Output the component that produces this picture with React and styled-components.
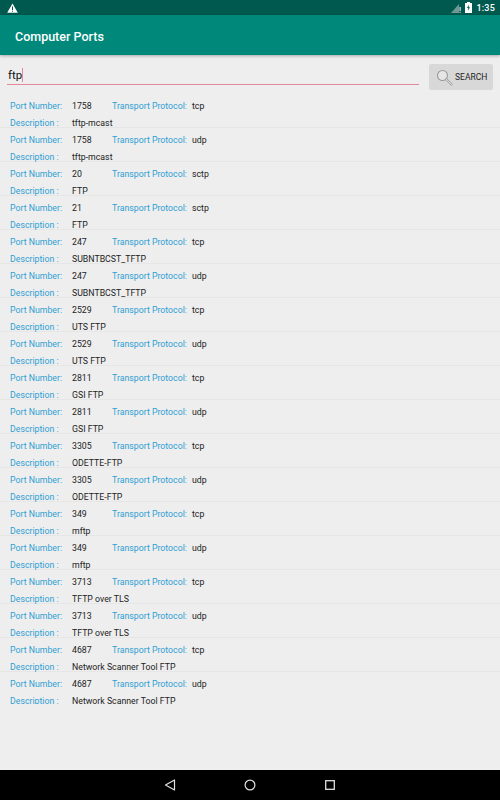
import React from 'react';
import styled, { createGlobalStyle } from 'styled-components';

const GlobalStyle = createGlobalStyle`
  html, body {
    margin: 0;
    padding: 0;
    background: #eeeeee;
    font-family: Roboto, "Liberation Sans", sans-serif;
  }
`;

const Screen = styled.div`
  width: 500px;
  height: 800px;
  display: flex;
  flex-direction: column;
  overflow: hidden;
  background: #eeeeee;
`;

const StatusBar = styled.div`
  height: 15px;
  background: #00594f;
  display: flex;
  align-items: center;
  justify-content: space-between;
  padding: 0 5px 0 7px;
  color: #ffffff;
`;

const StatusRight = styled.div`
  display: flex;
  align-items: center;
  gap: 4px;
`;

const Clock = styled.span`
  font-size: 9px;
  font-weight: 500;
  letter-spacing: 0.2px;
`;

const AppBar = styled.div`
  height: 40px;
  flex: none;
  background: #00897b;
  display: flex;
  align-items: center;
  padding: 2px 0 0 15px;
  box-sizing: border-box;
  color: #ffffff;
  font-size: 12.5px;
  font-weight: 500;
  box-shadow: 0 1px 3px rgba(0, 0, 0, 0.3);
  position: relative;
`;

const SearchRow = styled.div`
  height: 39px;
  flex: none;
  box-sizing: border-box;
  display: flex;
  align-items: flex-start;
  padding: 9px 7px 0;
`;

const SearchField = styled.div`
  width: 412px;
  height: 21px;
  box-sizing: border-box;
  border-bottom: 1.5px solid #e38a9a;
  font-size: 11.5px;
  color: #111111;
  padding: 2px 0 0 1px;
  display: flex;
  align-items: center;
`;

const Caret = styled.span`
  width: 1px;
  height: 14px;
  background: #e38a9a;
`;

const SearchButton = styled.div`
  width: 64px;
  height: 26px;
  margin-left: 10px;
  background: #d8d8d8;
  border-radius: 2px;
  display: flex;
  align-items: center;
  padding-left: 7px;
  box-sizing: border-box;
  gap: 2px;
  font-size: 8.5px;
  color: #222222;
`;

const List = styled.div`
  height: 610px;
  flex: none;
  overflow: hidden;
`;

const PortRow = styled.div`
  height: 34px;
  box-sizing: border-box;
  padding-left: 10px;
  border-bottom: 1px solid #e6e6e6;
  font-size: 8.75px;
  color: #222222;
`;

const Line = styled.div`
  height: ${({ $h }) => $h}px;
  display: flex;
  align-items: center;
  white-space: nowrap;
`;

const Label = styled.span`
  color: #2f9fd4;
  width: ${({ $w }) => $w}px;
  flex: none;
`;

const Value = styled.span`
  width: ${({ $w }) => ($w ? `${$w}px` : 'auto')};
  flex: none;
`;

const Filler = styled.div`
  flex: 1;
`;

const NavBar = styled.div`
  height: 30px;
  flex: none;
  background: #000000;
  display: flex;
  align-items: center;
  padding-left: 164px;
  gap: 68px;
`;

const ports = [
  ['1758', 'tcp', 'tftp-mcast'],
  ['1758', 'udp', 'tftp-mcast'],
  ['20', 'sctp', 'FTP'],
  ['21', 'sctp', 'FTP'],
  ['247', 'tcp', 'SUBNTBCST_TFTP'],
  ['247', 'udp', 'SUBNTBCST_TFTP'],
  ['2529', 'tcp', 'UTS FTP'],
  ['2529', 'udp', 'UTS FTP'],
  ['2811', 'tcp', 'GSI FTP'],
  ['2811', 'udp', 'GSI FTP'],
  ['3305', 'tcp', 'ODETTE-FTP'],
  ['3305', 'udp', 'ODETTE-FTP'],
  ['349', 'tcp', 'mftp'],
  ['349', 'udp', 'mftp'],
  ['3713', 'tcp', 'TFTP over TLS'],
  ['3713', 'udp', 'TFTP over TLS'],
  ['4687', 'tcp', 'Network Scanner Tool FTP'],
  ['4687', 'udp', 'Network Scanner Tool FTP'],
];

const WarningIcon = () => (
  <svg width="11" height="10" viewBox="0 0 11 10">
    <path d="M5.5 0.5 L10.8 9.8 H0.2 Z" fill="#fff" />
    <rect x="5" y="3.5" width="1" height="3.5" fill="#00594f" />
    <rect x="5" y="7.7" width="1" height="1" fill="#00594f" />
  </svg>
);

const SignalIcon = () => (
  <svg width="10" height="10" viewBox="0 0 10 10">
    <path d="M0 10 L8 1 V10 Z" fill="#6f9a94" />
    <rect x="8.6" y="4" width="1" height="4" fill="#fff" />
    <rect x="8.6" y="8.8" width="1" height="1" fill="#fff" />
  </svg>
);

const BatteryIcon = () => (
  <svg width="7" height="11" viewBox="0 0 7 11">
    <path d="M2 0 H5 V1 H7 V11 H0 V1 H2 Z" fill="#fff" />
    <path d="M4 2.5 L2 6 H3.3 L3 8.8 L5 5.2 H3.7 Z" fill="#00594f" />
  </svg>
);

const MagnifierIcon = () => (
  <svg width="17" height="17" viewBox="0 0 17 17" fill="none">
    <circle cx="6.5" cy="6.5" r="5" stroke="#9a9a9a" strokeWidth="1.1" fill="#e6e6e6" />
    <path d="M10.3 10.3 L15.5 15.5" stroke="#9f9f9f" strokeWidth="2.2" strokeLinecap="round" />
    <path d="M10.3 10.3 L15.5 15.5" stroke="#f2f2f2" strokeWidth="0.8" strokeLinecap="round" />
  </svg>
);

const BackIcon = () => (
  <svg width="12" height="12" viewBox="0 0 12 12" fill="none">
    <path d="M10.5 1 V11 L1.5 6 Z" stroke="#e0e0e0" strokeWidth="1.2" strokeLinejoin="round" />
  </svg>
);

const HomeIcon = () => (
  <svg width="12" height="12" viewBox="0 0 12 12" fill="none">
    <circle cx="6" cy="6" r="4.9" stroke="#e0e0e0" strokeWidth="1.2" />
  </svg>
);

const RecentIcon = () => (
  <svg width="12" height="12" viewBox="0 0 12 12" fill="none">
    <rect x="1.7" y="1.7" width="8.6" height="8.6" stroke="#e0e0e0" strokeWidth="1.3" />
  </svg>
);

export default function App() {
  return (
    <Screen>
      <GlobalStyle />
      <StatusBar>
        <WarningIcon />
        <StatusRight>
          <SignalIcon />
          <BatteryIcon />
          <Clock>1:35</Clock>
        </StatusRight>
      </StatusBar>
      <AppBar>Computer Ports</AppBar>
      <SearchRow>
        <SearchField>
          ftp
          <Caret />
        </SearchField>
        <SearchButton>
          <MagnifierIcon />
          SEARCH
        </SearchButton>
      </SearchRow>
      <List>
        {ports.map(([port, protocol, description], i) => (
          <PortRow key={i}>
            <Line $h={24}>
              <Label $w={62}>Port Number:</Label>
              <Value $w={40}>{port}</Value>
              <Label $w={80}>Transport Protocol:</Label>
              <Value>{protocol}</Value>
            </Line>
            <Line $h={10}>
              <Label $w={62}>Description :</Label>
              <Value>{description}</Value>
            </Line>
          </PortRow>
        ))}
      </List>
      <Filler />
      <NavBar>
        <BackIcon />
        <HomeIcon />
        <RecentIcon />
      </NavBar>
    </Screen>
  );
}
